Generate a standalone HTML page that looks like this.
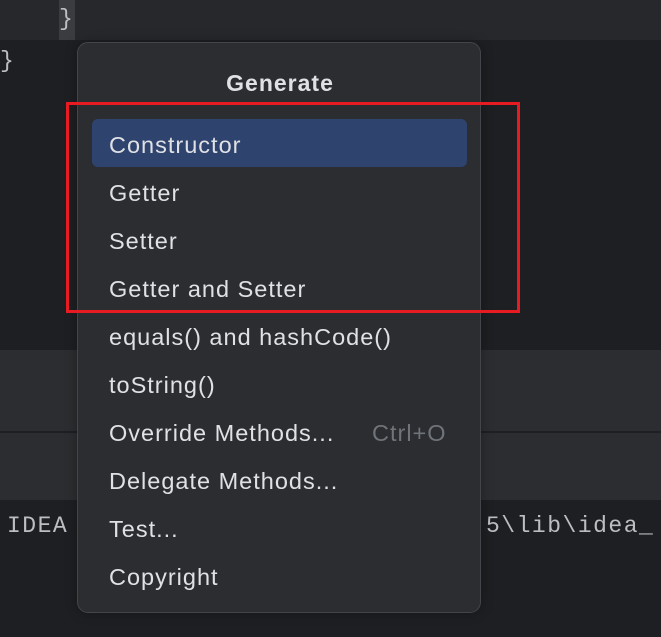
<!DOCTYPE html>
<html><head><style>
body{margin:0;width:661px;height:637px;overflow:hidden;background:#1e1f22;position:relative;font-family:"Liberation Sans",sans-serif}
.b{position:absolute;left:0;width:661px}
.mono{position:absolute;font-family:"Liberation Mono",monospace;font-size:23px;letter-spacing:1.5px;color:#bcbec4}
.pop{position:absolute;left:77px;top:42px;width:402px;height:569px;background:#2b2d30;border:1px solid #43454a;border-radius:11px;box-shadow:0 0 12px rgba(0,0,0,.3)}
.t{position:absolute;left:0;width:404px;text-align:center;top:27px;color:#dfe1e5;font-weight:bold;font-size:23px;letter-spacing:1px}
.it{position:absolute;left:31px;font-size:23.5px;letter-spacing:1px;color:#dfe1e5;line-height:48px;height:48px;top:0;padding-top:2px;white-space:nowrap}
.sel{position:absolute;left:14px;top:76px;width:375px;height:48px;background:#2e436e;border-radius:6px}
.red{position:absolute;left:66px;top:102px;width:448px;height:205px;border:3px solid #e81b23}
</style></head><body>
<div class="b" style="top:0;height:40px;background:#26282c"></div>
<div style="position:absolute;left:59px;top:0;width:16px;height:40px;background:#3a3c40"></div>
<div class="mono" style="left:59px;top:6px">}</div>
<div class="mono" style="left:0;top:48px">}</div>
<div class="b" style="top:350px;height:81px;background:#2b2d30"></div>
<div class="b" style="top:431px;height:2px;background:#1e1f22"></div>
<div class="b" style="top:433px;height:67px;background:#2b2d30"></div>
<div class="mono" style="left:7px;top:513px">IDEA</div>
<div class="mono" style="left:486px;top:513px">5\lib\idea_</div>
<div class="pop">
<div class="t">Generate</div>
<div class="sel"></div>
<div class="it" style="top:76px">Constructor</div>
<div class="it" style="top:124px">Getter</div>
<div class="it" style="top:172px">Setter</div>
<div class="it" style="top:220px">Getter and Setter</div>
<div class="it" style="top:268px">equals() and hashCode()</div>
<div class="it" style="top:316px">toString()</div>
<div class="it" style="top:364px">Override Methods...</div>
<div class="it" style="top:364px;left:294px;color:#6f737a">Ctrl+O</div>
<div class="it" style="top:412px">Delegate Methods...</div>
<div class="it" style="top:460px">Test...</div>
<div class="it" style="top:508px">Copyright</div>
</div>
<div class="red"></div>
</body></html>
